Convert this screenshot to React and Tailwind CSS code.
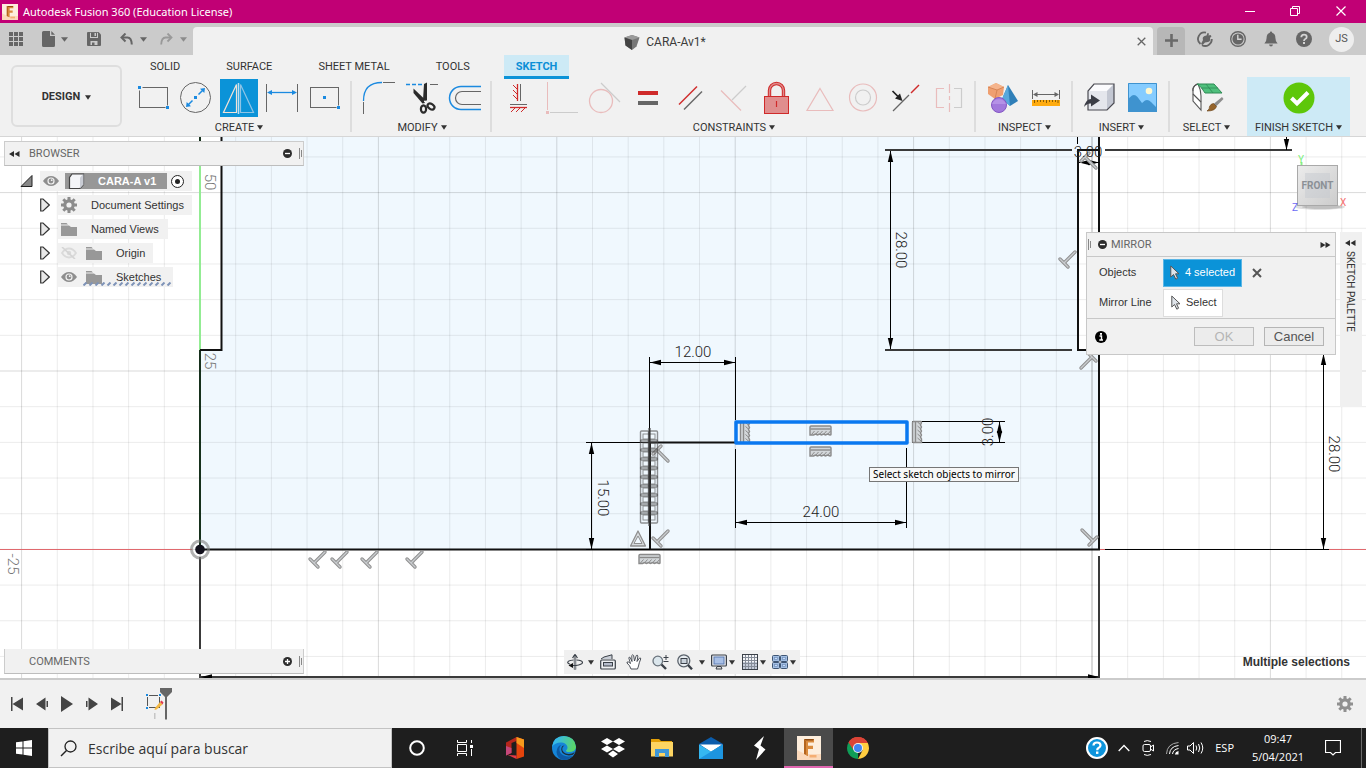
import React from "react";

function Svg({ w, h, className = "", children }) {
  return (
    <svg
      width={w}
      height={h}
      viewBox={`0 0 ${w} ${h}`}
      fill="none"
      aria-hidden="true"
      className={`shrink-0 ${className}`}
    >
      {children}
    </svg>
  );
}

function Caret({ color = "#333333", w = 7 }) {
  return (
    <Svg w={w} h={5}>
      <path d={`M0 0.3H${w}L${w / 2} 4.8Z`} fill={color} />
    </Svg>
  );
}

function FusionLogo({ size = 16 }) {
  return (
    <svg width={size} height={size} viewBox="0 0 24 24" aria-hidden="true" className="shrink-0">
      <rect width="24" height="24" fill="#fdeedd" />
      <path d="M0 14L8 18H24V24H0Z" fill="#fbd9bb" />
      <path d="M7 3L11 5.5V20L7 18Z" fill="#b5651d" />
      <path d="M7 3H17V6.5H11V9.8H16V13H11V20L9 19V5Z" fill="#d98a3c" />
      <path d="M7 3H17L16 4.5H9Z" fill="#8f4b12" />
      <path d="M12.5 19H19.5V21.5H12.5Z" fill="#f4a261" opacity="0.8" />
    </svg>
  );
}

/* ---------- Title bar ---------- */

function TitleBar() {
  return (
    <header className="flex h-[23px] shrink-0 items-center bg-[#c10075] pl-0.5 pr-0.5 text-white">
      <FusionLogo />
      <h1 className="ml-[5px] flex-1 font-['Noto_Sans','Open_Sans',sans-serif] text-[11px] leading-4">
        Autodesk Fusion 360 (Education License)
      </h1>
      <button aria-label="Minimize" className="grid h-full w-[45px] place-items-center">
        <Svg w={10} h={10}><path d="M0 4.5H10" stroke="#fff" /></Svg>
      </button>
      <button aria-label="Restore" className="grid h-full w-[45px] place-items-center">
        <Svg w={10} h={12}>
          <path d="M0.5 2.5H7.5V9.5H0.5ZM2.5 2.5V0.5H9.5V7.5H7.5" stroke="#fff" />
        </Svg>
      </button>
      <button aria-label="Close" className="grid h-full w-[47px] place-items-center">
        <Svg w={10} h={12}><path d="M0.5 0.5L9.5 9.5M9.5 0.5L0.5 9.5" stroke="#fff" strokeWidth="1.2" /></Svg>
      </button>
    </header>
  );
}

/* ---------- Quick access bar ---------- */

function QuickBar() {
  return (
    <div className="flex h-8 shrink-0 items-stretch bg-[#cbcbcb]">
      <div className="flex w-[193px] shrink-0 items-center pl-[9px]">
        <button aria-label="Data panel">
          <Svg w={14} h={14}>
            {[0, 5, 10].map((y) =>
              [0, 5, 10].map((x) => <rect key={`${x}-${y}`} x={x} y={y} width="4" height="4" fill="#666" />)
            )}
          </Svg>
        </button>
        <button aria-label="File" className="ml-[19px] flex items-center gap-1.5">
          <Svg w={13} h={16}>
            <path d="M0 1.5Q0 0 1.5 0H8V5H13V14.5Q13 16 11.5 16H1.5Q0 16 0 14.5Z" fill="#666" />
            <path d="M9.3 0L13 3.8H9.3Z" fill="#666" />
          </Svg>
          <Caret color="#666" />
        </button>
        <button aria-label="Save" className="ml-[19px]">
          <Svg w={14} h={14}>
            <path d="M0 1Q0 0 1 0H11.5L14 2.5V13Q14 14 13 14H1Q0 14 0 13Z" fill="#666" />
            <path d="M3 0.8H11V6H3Z" fill="#cbcbcb" />
            <path d="M4 0.5H10V5H4ZM7.5 1V4H9V1Z" fill="#666" fillRule="evenodd" />
            <path d="M3.5 9H10.5V13H3.5Z" fill="#cbcbcb" />
            <path d="M5 10.5H7.5V14H5Z" fill="#666" />
          </Svg>
        </button>
        <button aria-label="Undo" className="ml-[19px] flex items-center gap-[7px]">
          <Svg w={13} h={12}>
            <path d="M2 4.5H7.5Q11.5 4.5 11.8 11.5" stroke="#666" strokeWidth="2" />
            <path d="M5.5 0.5L1.5 4.5L5.5 8.5" stroke="#666" strokeWidth="2" />
          </Svg>
          <Caret color="#666" />
        </button>
        <button aria-label="Redo" className="ml-[13px] flex items-center gap-[7px]">
          <Svg w={13} h={12}>
            <path d="M11 4.5H5.5Q1.5 4.5 1.2 11.5" stroke="#999" strokeWidth="1.8" />
            <path d="M7.5 0.5L11.5 4.5L7.5 8.5" stroke="#999" strokeWidth="1.8" />
          </Svg>
          <Caret color="#8c8c8c" />
        </button>
      </div>
      <div className="mt-1 flex min-w-0 flex-1 items-center justify-center rounded-t bg-[#f1f1f1]">
        <div className="flex flex-1 items-center justify-center gap-1.5 pt-0.5 font-['Roboto',sans-serif] text-xs text-[#3c3c3c]">
          <Svg w={16} h={15}>
            <path d="M8 0L15.5 2.5L12.5 11.5L8 15L1.5 10.5L0.5 2.5Z" fill="#777" />
            <path d="M0.5 2.5L8 0L15.5 2.5L8 5Z" fill="#9a9a9a" />
            <path d="M8 5V15L1.5 10.5L0.5 2.5Z" fill="#444" />
          </Svg>
          <span>CARA-Av1*</span>
        </div>
        <button aria-label="Close document" className="mr-[7px]">
          <Svg w={9} h={9}><path d="M0.7 0.7L8.3 8.3M8.3 0.7L0.7 8.3" stroke="#666" strokeWidth="1.3" /></Svg>
        </button>
      </div>
      <button aria-label="New document" className="ml-1 mt-1 grid w-7 place-items-center rounded-t bg-[#b7b7b7] pb-0.5">
        <Svg w={13} h={13}><path d="M6.5 0V13M0 6.5H13" stroke="#6a6a6a" strokeWidth="2.6" /></Svg>
      </button>
      <div className="flex items-center gap-[17px] pl-3 pr-3">
        <button aria-label="Extensions">
          <Svg w={16} h={16}>
            <path d="M9 1.600A6.500 6.500 0 0 0 3.500 13M5 14.200A6.700 6.700 0 0 0 14.800 8" stroke="#666" strokeWidth="1.800" />
            <path d="M4 13L6 9Q5 6 7.500 5L9.500 4.500L10.500 2L12 2.500L11.500 4.500L13.500 4L14.500 5.200L13 7Q14 10 11 11L8 11.500L5.500 14Z" fill="#666" />
          </Svg>
        </button>
        <button aria-label="Job status">
          <Svg w={16} h={16}>
            <circle cx="8" cy="8" r="7.3" stroke="#666" strokeWidth="1.4" />
            <circle cx="8" cy="8" r="5.6" fill="#666" />
            <path d="M7.8 3.8V8.2H11.6" stroke="#d4d4d4" strokeWidth="1.4" />
          </Svg>
        </button>
        <button aria-label="Notifications">
          <Svg w={16} h={16}>
            <path d="M8 0.5Q9.2 0.5 9.2 1.8Q12.4 2.8 12.4 7Q12.4 10.5 14.6 12.5H1.4Q3.6 10.5 3.6 7Q3.6 2.8 6.8 1.8Q6.8 0.5 8 0.5Z" fill="#666" />
            <path d="M6 13.5H10Q9.6 15.5 8 15.5Q6.4 15.5 6 13.5Z" fill="#666" />
          </Svg>
        </button>
        <button aria-label="Help">
          <Svg w={16} h={16}>
            <circle cx="8" cy="8" r="8" fill="#666" />
            <path d="M5.3 6.3Q5.3 3.7 8 3.7Q10.7 3.7 10.7 6Q10.7 7.3 9.2 8Q8 8.6 8 10" stroke="#d4d4d4" strokeWidth="1.8" />
            <rect x="7" y="11" width="2" height="2" fill="#d4d4d4" />
          </Svg>
        </button>
        <button aria-label="Account" className="grid size-[25px] place-items-center rounded-full bg-[#eeeeee] pt-px font-['Roboto',sans-serif] text-[11px] text-[#555555]">
          JS
        </button>
      </div>
    </div>
  );
}

/* ---------- Ribbon icons, each on a 38 x 38 tile ---------- */

const G = "#666666";
const B = "#1b8ae0";
const R = "#cf2a2a";
const FR = "#e9bcbc";
const FG = "#cccccc";

const icons = {
  rectangle: (
    <>
      <rect x="5.5" y="8.5" width="28" height="20" stroke={G} />
      <rect x="3.5" y="6.5" width="5" height="5" fill="#f1f1f1" />
      <rect x="4" y="7" width="3" height="3" fill={B} />
      <rect x="31.5" y="26.5" width="5" height="5" fill="#f1f1f1" />
      <rect x="32" y="27" width="3" height="3" fill={B} />
    </>
  ),
  circle: (
    <>
      <circle cx="18.5" cy="18.5" r="15" stroke={G} />
      <path d="M11 26L15.5 21.5M21.5 15.5L26 11" stroke={B} strokeWidth="1.5" />
      <path d="M28 9L27.3 14L23 9.7ZM9 28L9.7 23L14 27.3Z" fill={B} />
      <rect x="17" y="17" width="3" height="3" fill={B} />
    </>
  ),
  mirror: (
    <>
      <rect width="38" height="38" fill="#0b93d8" />
      <path d="M16.5 5.5V33.5H3.5Z" stroke="#f2e2d6" strokeWidth="1.2" />
      <path d="M20.5 5.5V33.5H33.5Z" stroke="#8ec4e6" strokeWidth="1.2" />
      <path d="M18.5 4V35" stroke="#bfe0f2" strokeWidth="1.5" />
    </>
  ),
  dimension: (
    <>
      <path d="M3.5 5V33M34.5 5V33" stroke={G} />
      <path d="M6 13.5H32" stroke={B} strokeWidth="1.3" />
      <path d="M4 13.5L9 11V16ZM34 13.5L29 11V16Z" fill={B} />
    </>
  ),
  centerRect: (
    <>
      <rect x="4.5" y="8.5" width="28" height="20" stroke={G} />
      <rect x="17" y="17" width="3" height="3" fill={B} />
      <rect x="30.5" y="26.5" width="5" height="5" fill="#f1f1f1" />
      <rect x="31" y="27" width="3" height="3" fill={B} />
    </>
  ),
  fillet: (
    <>
      <path d="M3.5 22Q3.5 3.5 22 3.5" stroke={B} strokeWidth="1.3" />
      <path d="M3.5 23V35M23 3.5H35" stroke={G} />
    </>
  ),
  trim: (
    <>
      <path d="M3 5.5H7M9 5.5H13M15 5.5H19" stroke={B} strokeWidth="1.3" />
      <path d="M27 5.5H35" stroke={G} />
      <path d="M21 5L24 3.5V21L21.5 23.5L20 21Z" fill="#2b2b2b" />
      <path d="M10.5 9.5L22 20.5V24L19.5 24.5L10.5 14Z" fill="#2b2b2b" />
      <ellipse cx="20.5" cy="30" rx="2.6" ry="3.6" stroke="#2b2b2b" strokeWidth="2.2" />
      <ellipse cx="28" cy="27.5" rx="3.8" ry="2.5" transform="rotate(35 28 27.5)" stroke="#2b2b2b" strokeWidth="2.2" />
      <circle cx="22" cy="22.5" r="1" fill="#fff" />
    </>
  ),
  offset: (
    <>
      <path d="M35 7.5H15A11.5 11.5 0 0 0 15 30.5H35" stroke={B} strokeWidth="1.5" />
      <path d="M35 12.5H16A6.5 6.5 0 0 0 16 25.5H35" stroke={G} strokeWidth="1.2" />
    </>
  ),
  horizVert: (
    <>
      <path d="M17.5 5V22" stroke={R} strokeWidth="1.3" />
      <path d="M20.5 5V22" stroke={G} />
      <path d="M13 6L17 10M13 11L17 15M13 16L17 20" stroke={R} />
      <path d="M10 25.500H27" stroke={G} />
      <path d="M10 28.500H27" stroke={R} strokeWidth="1.3" />
      <path d="M15 29L11 33M20 29L16 33M25 29L21 33" stroke={R} />
    </>
  ),
  coincident: (
    <>
      <path d="M4.5 3V31" stroke={FR} />
      <path d="M7 33.5H35" stroke={FG} />
      <rect x="3" y="32" width="3" height="3" fill={FR} />
    </>
  ),
  tangent: (
    <>
      <circle cx="15" cy="22" r="11.5" stroke={FR} strokeWidth="1.3" />
      <path d="M15 4L34 23" stroke={FG} strokeWidth="1.2" />
    </>
  ),
  equal: (
    <>
      <rect x="9" y="12" width="20" height="4" fill={R} />
      <rect x="9" y="22" width="20" height="4" fill={G} />
    </>
  ),
  parallel: (
    <>
      <path d="M7 25.5L25 7.5" stroke={R} strokeWidth="1.4" />
      <path d="M12 30.5L30 12.5" stroke={G} strokeWidth="1.4" />
    </>
  ),
  perpendicular: (
    <>
      <path d="M6 11.5L26 31.5" stroke={FR} strokeWidth="1.2" />
      <path d="M17 21L31 7" stroke={FG} strokeWidth="1.2" />
    </>
  ),
  lock: (
    <>
      <path d="M11.5 17V11.500A7 7 0 0 1 25.500 11.500V17" stroke={R} strokeWidth="3.4" />
      <path d="M11.5 17V11.500A7 7 0 0 1 25.500 11.500V17" stroke="#e08a8a" strokeWidth="1.4" />
      <rect x="6.500" y="17.500" width="24" height="17" fill="#e08e8e" stroke={R} />
      <path d="M18.500 22V28" stroke={R} strokeWidth="1.2" />
    </>
  ),
  midpoint: <path d="M19 9.5L32 31.5H6Z" stroke={FR} strokeWidth="1.2" />,
  concentric: (
    <>
      <circle cx="19" cy="18.5" r="13.5" stroke={FR} strokeWidth="1.2" />
      <circle cx="19" cy="18.5" r="7.5" stroke={FG} strokeWidth="1.2" />
    </>
  ),
  collinear: (
    <>
      <path d="M6 32L22 16" stroke={G} strokeWidth="1.3" />
      <path d="M24 14L32 6" stroke={R} strokeWidth="1.5" />
      <path d="M5.500 12L11 17.500" stroke="#222" strokeWidth="1.7" />
      <path d="M15.500 22L8 19.500L13 14.500Z" fill="#222" />
    </>
  ),
  symmetry: (
    <>
      <path d="M14 9.5H6.5V28.5H14" stroke={FR} strokeWidth="1.2" />
      <path d="M24 9.5H31.5V28.5H24" stroke={FG} strokeWidth="1.2" />
      <path d="M19.5 5V14M19.5 17V21M19.5 24V33" stroke={FR} strokeWidth="1.2" />
    </>
  ),
  shapes: (
    <>
      <path d="M12 4L20 8L19 16L11 20L4 15V8Z" fill="#ef9f70" />
      <path d="M12 4L20 8L13 11L4 8Z" fill="#f5b48c" />
      <path d="M13 11L11 20M4 8L13 11L20 8" stroke="#cf7c4c" strokeWidth="0.8" />
      <path d="M24 6L34 22L26 27L18 20Z" fill="#2f7fb8" />
      <path d="M24 6L26 27L18 20Z" fill="#58a8dc" />
      <circle cx="15" cy="26" r="7.5" fill="#a279dc" stroke="#8456c4" />
      <path d="M8 25A7.5 7.5 0 0 1 22 25Z" fill="#b592e6" />
    </>
  ),
  measure: (
    <>
      <path d="M5.5 11V20M32.5 11V20M7 15.5H31" stroke={G} />
      <path d="M6 15.5L10.5 13V18ZM32 15.5L27.500 13V18Z" fill={G} />
      <rect x="5" y="21" width="28" height="6" fill="#ffab0f" />
      <path d="M7.5 21V24M10.5 21V23M13.5 21V23M16.5 21V23M19.5 21V24M22.5 21V23M25.5 21V23M28.5 21V23M31 21V24" stroke="#8a5c00" />
    </>
  ),
  insert: (
    <>
      <path d="M13 5H33V24L26 31H7V12Z" fill="#e4e6ec" />
      <path d="M13 5H33L26 12H7Z" fill="#fbfbfd" />
      <path d="M26 12L33 5V24L26 31Z" fill="#c3c7d2" />
      <path d="M13 5H33V24L26 31H7V12Z" stroke="#4a4a52" strokeWidth="1.2" />
      <path d="M3 28Q5 20 10 20V15.5L19 21.5L10 27.5V24.5Q6 24 3 28Z" fill="#3b3d46" />
    </>
  ),
  image: (
    <>
      <rect x="4" y="4" width="29" height="29" fill="#85ccff" />
      <path d="M4 20L8 16.5Q11 15 13.5 18L18 24L21 21.5Q24 20 27 23L33 29V33H4Z" fill="#3f93cf" />
      <path d="M4.5 4.5H32.5V32.5H4.5Z" stroke="#3f93cf" />
      <circle cx="25" cy="12" r="3.3" fill="#fff8d0" />
    </>
  ),
  select: (
    <>
      <path d="M5 10Q6 6 10 5Q13 11 13 17V31L5 22Z" fill="#fff" stroke="#555" strokeWidth="1.1" />
      <path d="M5 15L13 23M9 5Q4 8 5 12" stroke="#555" strokeWidth="1.1" />
      <path d="M9 5H26L34 14H17Q14 8 9 5Z" fill="#4fbf7c" stroke="#2e8a55" />
      <path d="M18 5L25 14M13 9H30" stroke="#2e8a55" strokeWidth="0.8" />
      <path d="M34 18L35.5 20L28 27.5L25.5 25Z" fill="#8d8d8d" />
      <path d="M25.5 24.5L28.5 27.5Q27 32 19 32Q22 30 21.5 27.5Q23 24.5 25.5 24.5Z" fill="#95642c" stroke="#6d4518" strokeWidth="0.7" />
    </>
  ),
  finish: (
    <>
      <circle cx="19" cy="19" r="15.5" fill="#5ec70a" />
      <path d="M11.5 19L17 24.5L28 13.5" stroke="#fff" strokeWidth="4" />
    </>
  ),
};

const groupLabel = "flex h-[19px] items-center gap-[3px] whitespace-nowrap pt-0.5";

function ToolGroup({ label, tools, last = false }) {
  return (
    <>
      <section className={last ? "flex w-[73px] flex-col items-center" : "flex flex-col items-center pl-2 pr-1.5"}>
        <div className="flex gap-[5px]">
          {tools.map((t) => (
            <button key={t} aria-label={t} className="size-[38px]">
              <Svg w={38} h={38}>{icons[t]}</Svg>
            </button>
          ))}
        </div>
        <button className={groupLabel}>
          {label}
          <Caret w={6} />
        </button>
      </section>
      {!last && <div className="mt-0.5 h-[51px] w-0.5 shrink-0 bg-[#dddddd]" />}
    </>
  );
}

function Ribbon() {
  return (
    <div className="flex h-[82px] shrink-0 border-b border-[#d6d6d6] bg-[#f1f1f1] font-['Roboto','Liberation_Sans',sans-serif] text-[11px] leading-4 text-[#333333]">
      <button className="ml-[11px] mt-2.5 flex h-[62px] w-[111px] shrink-0 items-center justify-center gap-[5px] rounded-md border-2 border-[#dedede] pt-0.5 font-bold">
        DESIGN
        <Caret w={6} />
      </button>
      <div className="ml-1 flex flex-col">
        <nav className="ml-3 flex h-6 gap-[22px]">
          {["SOLID", "SURFACE", "SHEET METAL", "TOOLS"].map((t) => (
            <button key={t} className="px-3">{t}</button>
          ))}
          <button className="border-b-3 border-[#0b93d8] bg-[#cdeaf6] px-3 pt-0.5 font-bold text-[#0b8fd6]">SKETCH</button>
        </nav>
        <div className="flex">
          <ToolGroup label="CREATE" tools={["rectangle", "circle", "mirror", "dimension", "centerRect"]} />
          <ToolGroup label="MODIFY" tools={["fillet", "trim", "offset"]} />
          <ToolGroup
            label="CONSTRAINTS"
            tools={["horizVert", "coincident", "tangent", "equal", "parallel", "perpendicular", "lock", "midpoint", "concentric", "collinear", "symmetry"]}
          />
          <ToolGroup label="INSPECT" tools={["shapes", "measure"]} />
          <ToolGroup label="INSERT" tools={["insert", "image"]} />
          <ToolGroup label="SELECT" tools={["select"]} last />
          <section className="-mt-0.5 ml-1 flex w-[103px] flex-col items-center bg-[#cdeaf6] pt-0.5">
            <button aria-label="Finish sketch" className="size-[38px]">
              <Svg w={38} h={38}>{icons.finish}</Svg>
            </button>
            <button className={groupLabel}>
              FINISH SKETCH
              <Caret w={6} />
            </button>
          </section>
        </div>
      </div>
    </div>
  );
}

/* ---------- Sketch drawing ---------- */

const GRID = 35.68;

function Arrow({ x, y, dir }) {
  const angle = { up: 0, right: 90, down: 180, left: 270 }[dir];
  return <path d="M0 0L2.7 11H-2.7Z" fill="#000" transform={`translate(${x} ${y}) rotate(${angle})`} />;
}

function Perp({ x, y, angle = 0 }) {
  const d = "M8 -7L-3 4M-7 0L1 8";
  return (
    <g transform={`translate(${x} ${y}) rotate(${angle})`} strokeLinecap="round">
      <path d={d} stroke="#8f8f8f" strokeWidth="3.4" />
      <path d={d} stroke="#c9cccf" strokeWidth="1.4" />
    </g>
  );
}

function Level({ x, y, vertical = false }) {
  return (
    <g transform={`translate(${x} ${y}) rotate(${vertical ? -90 : 0})`} stroke="#8a8a8a">
      <path d="M-10.5 -3.5Q-10.5 -4.500 -9.500 -4.500H9.500Q10.500 -4.500 10.500 -3.500V4Q10.500 4.500 9.500 4.500L7 3.500L5 4.500L3 3.500L1 4.500L-1 3.500L-3 4.500L-5 3.500L-7 4.500H-10.500Z" fill="#d3d7da" strokeWidth="1.4" />
      <path d="M-10 -1.500H10" strokeWidth="1.4" />
      <path d="M-9 4L-6 0.500M-5 4L-2 0.500M-1 4L2 0.500M3 4L6 0.500M7 4L10 0.500" />
    </g>
  );
}

function Label({ x, y, angle = 0, children, color = "#222222" }) {
  return (
    <text
      transform={`translate(${x} ${y}) rotate(${angle})`}
      textAnchor="middle"
      dominantBaseline="central"
      fill={color}
      className="font-['Roboto','Noto_Sans',sans-serif] text-[15px] font-light"
    >
      {children}
    </text>
  );
}

function SketchDrawing() {
  const columns = Array.from({ length: 80 }, (_, i) => i - 5);
  const rows = Array.from({ length: 50 }, (_, i) => i - 15);
  return (
    <svg className="absolute inset-0 size-full" fill="none" aria-label="Sketch of CARA-A">
      <g transform="translate(0 -137)">
        <path d="M221 137H1099V150H1078V350H1099V549H200V350H221Z" fill="#f0f8fe" />
        {columns.map((i) => (
          <path key={i} d={`M${200 + i * GRID} 0V3000`} stroke="#000" strokeOpacity={i % 5 === 0 ? 0.15 : 0.08} />
        ))}
        {rows.map((i) => (
          <path key={i} d={`M0 ${549.4 + i * GRID}H4000`} stroke="#000" strokeOpacity={i % 5 === 0 ? 0.15 : 0.08} />
        ))}
        <path d="M1092 137V678" stroke="#000" strokeOpacity="0.08" strokeWidth="2" />

        <path d="M0 549.5H192M1099 549.5H4000" stroke="#e0696e" />
        <path d="M200 137V350" stroke="#93ec93" strokeWidth="2" />
        <path d="M200 137V142" stroke="#16301c" strokeWidth="2" />
        <path d="M200 350V549" stroke="#16301c" strokeWidth="2" />

        <g stroke="#111" strokeWidth="2">
          <path d="M200 350H221.5V137" />
          <path d="M200 549.5H1099V137" />
          <path d="M1099 150H1078V350H1099" />
          <path d="M650 549V442.5H735" />
        </g>
        <g stroke="#3a3a3a" strokeWidth="2">
          <path d="M885 150H1072M1105 150H1292M885 350H1072" />
          <path d="M200 557V678M1099 556V678M200 677H1099" />
        </g>
        <g stroke="#000">
          <path d="M890.5 151V349" />
          <path d="M1077.5 137V144M1286.5 137V150M1079 162.5H1099" />
          <path d="M649.5 357V442M735.5 357V420M650 362.5H735" />
          <path d="M586 442.5H650M586 549.5H650M591.5 443V549" />
          <path d="M735.5 449V528M906.5 448V528M736 522.5H906" />
          <path d="M912 421.5H1005M912 442.5H1005M999.5 422V442" />
          <path d="M1105 549.5H1329M1323.5 350V549" />
        </g>
        <Arrow x={890.5} y={151} dir="up" />
        <Arrow x={890.5} y={349} dir="down" />
        <Arrow x={1286.5} y={150} dir="down" />
        <Arrow x={1079} y={162.5} dir="left" />
        <Arrow x={1099} y={162.5} dir="right" />
        <Arrow x={650} y={362.5} dir="left" />
        <Arrow x={735} y={362.5} dir="right" />
        <Arrow x={591.5} y={443} dir="up" />
        <Arrow x={591.5} y={549} dir="down" />
        <Arrow x={736} y={522.5} dir="left" />
        <Arrow x={906} y={522.5} dir="right" />
        <Arrow x={999.5} y={422} dir="up" />
        <Arrow x={999.5} y={442} dir="down" />
        <Arrow x={1323.5} y={354} dir="up" />
        <Arrow x={1323.5} y={549} dir="down" />
        <Arrow x={201} y={677} dir="left" />
        <Arrow x={1099} y={677} dir="right" />

        <Perp x={317} y={559} />
        <Perp x={339} y={559} />
        <Perp x={369} y={559} />
        <Perp x={414} y={559} />
        <Perp x={660} y={538} />
        <Perp x={1067} y={259} />
        <Perp x={1089} y={361} angle={180} />
        <Perp x={1089} y={538} angle={-90} />
        <Perp x={661} y={453} angle={90} />
        <Perp x={1089} y={160} angle={90} />

        <g stroke="#4a4a4a" strokeOpacity="0.6">
          {Array.from({ length: 10 }, (_, i) => (
            <g key={i}>
              <rect x="640.5" y={431 + i * 9} width="8" height="11" rx="1" strokeWidth="1.4" />
              <rect x="649.5" y={431 + i * 9} width="8" height="11" rx="1" strokeWidth="1.4" />
              <rect x="643" y={434 + i * 9} width="12" height="5" />
            </g>
          ))}
        </g>
        <path d="M649.5 428V526" stroke="#333" strokeWidth="2" />
        <path d="M638 531L645.5 546H630.5Z" stroke="#8f8f8f" strokeWidth="1.3" fill="#d6dadd" strokeLinejoin="round" />
        <path d="M638 536L642 543.5H634Z" stroke="#8f8f8f" fill="#f0f8fe" />

        <Level x={649.5} y={559} />
        <Level x={820.5} y={430.5} />
        <Level x={820.5} y={451.5} />
        <Level x={745} y={432.5} vertical />
        <Level x={917} y={432} vertical />
        <rect x="736" y="422" width="171" height="21" stroke="#0a78f0" strokeWidth="3.5" strokeLinejoin="round" />

        <circle cx="200" cy="549.5" r="8.5" stroke="#7d7d7d" strokeOpacity="0.6" strokeWidth="3" />
        <circle cx="200" cy="549.5" r="4.8" fill="#12101c" />

        <Label x={693} y={352}>12.00</Label>
        <Label x={821} y={512}>24.00</Label>
        <Label x={1088} y={152}>3.00</Label>
        <Label x={901} y={250} angle={90}>28.00</Label>
        <Label x={603} y={498} angle={90}>15.00</Label>
        <Label x={1334} y={454} angle={90}>28.00</Label>
        <Label x={988} y={432} angle={-90}>3.00</Label>
        <Label x={210} y={182} angle={90} color="#777777">50</Label>
        <Label x={210} y={361} angle={90} color="#777777">25</Label>
        <Label x={13} y={564} angle={90} color="#777777">-25</Label>
      </g>
    </svg>
  );
}

/* ---------- Browser tree ---------- */

function Expander() {
  return (
    <Svg w={10} h={14}>
      <path d="M0.7 1V13H3L9.3 7L3 1Z" fill="#e8e8e8" stroke="#333" strokeWidth="1.2" />
    </Svg>
  );
}

function Eye() {
  return (
    <Svg w={16} h={12}>
      <path d="M0 6Q3.5 1 8 1Q12.5 1 16 6Q12.5 11 8 11Q3.5 11 0 6Z" fill="#8e8e8e" />
      <circle cx="8" cy="6" r="3.6" fill="#f1f1f1" />
      <circle cx="8" cy="6" r="2.4" fill="#8e8e8e" />
      <circle cx="8.7" cy="5.2" r="0.9" fill="#f1f1f1" />
    </Svg>
  );
}

function EyeOff() {
  return (
    <Svg w={16} h={12}>
      <path d="M1 6Q4 1.5 8 1.5Q12 1.5 15 6Q12 10.5 8 10.5Q4 10.5 1 6Z" stroke="#dadada" strokeWidth="1.8" />
      <circle cx="8" cy="6" r="2.2" fill="#dadada" />
      <path d="M1 0L14 12" stroke="#d4d4d4" strokeWidth="1.6" />
    </Svg>
  );
}

function Folder() {
  return (
    <Svg w={16} h={13}>
      <path d="M0 0H5.5L7 1.5H0ZM0 2.5H8L10 4H16V13H0Z" fill="#989898" />
    </Svg>
  );
}

function Gear({ color = "#8c8c8c" }) {
  return (
    <Svg w={16} h={16}>
      <g stroke={color} strokeWidth="3">
        <path d="M8 0V16M0 8H16M2.3 2.3L13.7 13.7M13.7 2.3L2.3 13.7" />
      </g>
      <circle cx="8" cy="8" r="5.8" fill={color} />
      <circle cx="8" cy="8" r="2.6" fill="#f1f1f1" />
    </Svg>
  );
}

function Grip({ className = "" }) {
  return (
    <Svg w={3} h={11} className={className}>
      <path d="M0.5 0V11M2.5 2V9" stroke="#888" />
    </Svg>
  );
}

function CircleSign({ plus = false }) {
  return (
    <Svg w={9} h={9}>
      <circle cx="4.5" cy="4.5" r="4.5" fill="#2d2d2d" />
      <path d={plus ? "M2 4.5H7M4.5 2V7" : "M2 4.5H7"} stroke="#fff" strokeWidth="1.3" />
    </Svg>
  );
}

const rowText = "font-['Liberation_Sans',Arial,sans-serif] text-[11px] leading-4 text-[#333333]";

function BrowserPanel() {
  return (
    <aside className="absolute left-1 top-1 w-[300px]">
      <div className="flex h-[25px] items-center border border-[#cccccc] border-b-[#bdbdbd] bg-[#f1f1f1] pl-1 pr-px font-['Roboto',sans-serif] text-[11px] text-[#666666]">
        <button aria-label="Collapse browser">
          <Svg w={11} h={6}><path d="M5 0V6L0 3ZM10.5 0V6L5.5 3Z" fill="#2d2d2d" /></Svg>
        </button>
        <h2 className="ml-[9px] flex-1 pt-0.5">BROWSER</h2>
        <button aria-label="Minimize browser"><CircleSign /></button>
        <Grip className="ml-[7px]" />
      </div>
      <ul className="mt-[3px] flex flex-col">
        <li className="flex h-6 items-center pl-4">
          <button aria-label="Collapse CARA-A">
            <Svg w={13} h={12}>
              <path d="M12 0.5V11.5H1Z" fill="#888" stroke="#222" />
            </Svg>
          </button>
          <div className="ml-[7px] flex h-5 w-[152px] items-center bg-[#f1f1f1] pl-[3px]">
            <button aria-label="Toggle visibility"><Eye /></button>
            <button className="ml-1.5 flex h-4 w-[102px] items-center gap-[13px] bg-[#979797] pl-[3px] font-['Liberation_Sans',Arial,sans-serif] text-[11px] font-bold text-white">
              <Svg w={17} h={16}>
                <path d="M4 1H15.5V11.5L12 15.5H1.5V4.5Z" fill="#f4f5f8" stroke="#444" strokeWidth="1.2" />
                <path d="M12 4.5L15.5 1V11.5L12 15.5Z" fill="#c9ccd4" />
              </Svg>
              CARA-A v1
            </button>
            <label className="ml-1 flex">
              <input type="radio" name="active-component" defaultChecked aria-label="Active component" className="grid size-[13px] appearance-none place-items-center rounded-full border border-[#222222] bg-white before:size-[5px] before:rounded-full before:bg-[#222222] before:content-['']" />
            </label>
          </div>
        </li>
        <li className="flex h-6 items-center pl-9">
          <button aria-label="Expand Document Settings"><Expander /></button>
          <div className={`ml-2 flex h-5 w-[134px] items-center gap-[14px] bg-[#f1f1f1] pl-[3px] ${rowText}`}>
            <Gear />
            <span>Document Settings</span>
          </div>
        </li>
        <li className="flex h-6 items-center pl-9">
          <button aria-label="Expand Named Views"><Expander /></button>
          <div className={`ml-2 flex h-5 w-[110px] items-center gap-[14px] bg-[#f1f1f1] pl-[3px] ${rowText}`}>
            <Folder />
            <span>Named Views</span>
          </div>
        </li>
        <li className="flex h-6 items-center pl-9">
          <button aria-label="Expand Origin"><Expander /></button>
          <div className={`ml-2 flex h-5 w-[95px] items-center bg-[#f1f1f1] pl-[3px] ${rowText}`}>
            <button aria-label="Show Origin"><EyeOff /></button>
            <span className="ml-[9px] flex items-center gap-[14px]"><Folder />Origin</span>
          </div>
        </li>
        <li className="flex h-6 items-center pl-9">
          <button aria-label="Expand Sketches"><Expander /></button>
          <div className={`relative ml-2 flex h-5 w-[115px] items-center bg-[#f1f1f1] pl-[3px] ${rowText}`}>
            <button aria-label="Hide Sketches"><Eye /></button>
            <span className="ml-[9px] flex items-center gap-[14px]"><Folder />Sketches</span>
            <Svg w={90} h={4} className="absolute bottom-px left-[25px]">
              {Array.from({ length: 15 }, (_, i) => (
                <path key={i} d={`M${i * 6 + 0.5} 3.5L${i * 6 + 3.5} 0.5`} stroke="#7e93b8" strokeWidth="2" />
              ))}
            </Svg>
          </div>
        </li>
      </ul>
    </aside>
  );
}

function CommentsPanel() {
  return (
    <div className="absolute bottom-1 left-1 flex h-[25px] w-[300px] items-center border border-t-0 border-[#cccccc] border-b-[#bdbdbd] bg-[#f1f1f1] pl-6 pr-px font-['Roboto',sans-serif] text-[11px] text-[#666666]">
      <h2 className="flex-1 pt-0.5">COMMENTS</h2>
      <button aria-label="Expand comments"><CircleSign plus /></button>
      <Grip className="ml-[7px]" />
    </div>
  );
}

/* ---------- Mirror dialog ---------- */

function Pointer() {
  return (
    <Svg w={10} h={15}>
      <path d="M0.8 1V12L3.5 9.5L5.8 14.2L7.6 13.2L5.5 8.8H9Z" fill="#dfe4ea" stroke="#555" />
    </Svg>
  );
}

function MirrorDialog() {
  return (
    <section
      aria-label="Mirror"
      className="absolute right-[30px] top-[95px] w-[250px] border border-[#c8c8c8] bg-[#f1f1f1] font-['Liberation_Sans',Arial,sans-serif] text-[11px] text-[#333333]"
    >
      <div className="flex h-6 items-center border-b border-[#c8c8c8] pl-px pr-1 font-['Roboto',sans-serif] text-[#666666]">
        <Grip />
        <button aria-label="Collapse dialog" className="ml-[7px]"><CircleSign /></button>
        <h2 className="ml-1 flex-1 pt-0.5">MIRROR</h2>
        <button aria-label="Dock">
          <Svg w={11} h={6}><path d="M0.5 0V6L5.5 3ZM5.5 0V6L10.5 3Z" fill="#2d2d2d" /></Svg>
        </button>
      </div>
      <div className="flex h-[62px] flex-col justify-center gap-0.5 border-b border-[#c8c8c8] pl-3">
        <div className="flex h-7 items-center">
          <label htmlFor="objects" className="w-16">Objects</label>
          <button id="objects" className="flex h-full w-[79px] items-center justify-center gap-[5px] border border-[#5ab6e6] bg-[#0b93d8] text-white">
            <Pointer />
            4 selected
          </button>
          <button aria-label="Clear selection" className="ml-[10px]">
            <Svg w={10} h={10}><path d="M1 1L9 9M9 1L1 9" stroke="#555" strokeWidth="2" /></Svg>
          </button>
        </div>
        <div className="flex h-7 items-center">
          <label htmlFor="mirror-line" className="w-16">Mirror Line</label>
          <button id="mirror-line" className="flex h-full items-center gap-[5px] border border-[#dddddd] bg-white pl-[7px] pr-[5px]">
            <Pointer />
            Select
          </button>
        </div>
      </div>
      <div className="flex h-[35px] items-center pl-2 pr-[11px]">
        <Svg w={12} h={12}>
          <circle cx="6" cy="6" r="6" fill="#000" />
          <path d="M4.5 5H6.5V9M4.3 9H8" stroke="#fff" strokeWidth="1.4" />
          <rect x="5" y="2" width="2" height="1.8" fill="#fff" />
        </Svg>
        <div className="flex flex-1 justify-end gap-2.5 text-[13px]">
          <button disabled className="h-[19px] w-[60px] border border-[#bdbdbd] bg-[#ececec] leading-4 text-[#b5b5b5]">OK</button>
          <button className="h-[19px] w-[60px] border border-[#b5b5b5] bg-[#ececec] leading-4 text-[#555555]">Cancel</button>
        </div>
      </div>
    </section>
  );
}

function ViewCube() {
  return (
    <svg width="66" height="68" viewBox="0 0 66 68" className="absolute right-2 top-[13px]" role="img" aria-label="View cube: front">
      <defs>
        <linearGradient id="cube" x1="0" y1="0" x2="1" y2="1">
          <stop offset="0" stopColor="#ececec" />
          <stop offset="1" stopColor="#cccccc" />
        </linearGradient>
      </defs>
      <ellipse cx="28" cy="57" rx="25" ry="3" fill="#000" opacity="0.12" />
      <ellipse cx="30" cy="57" rx="20" ry="2" fill="#000" opacity="0.14" />
      <path d="M9.5 12V15" stroke="#8cf08c" strokeWidth="2" />
      <rect x="5.5" y="15.5" width="40" height="40" fill="url(#cube)" stroke="#a9a9a9" />
      <rect x="13" y="23" width="25" height="25" fill="#c5c9cf" opacity="0.5" />
      <g className="font-['Roboto',sans-serif] text-[10px] font-bold">
        <text x="25.5" y="39" textAnchor="middle" fill="#8b9096">FRONT</text>
        <g fontWeight="400">
          <text x="6" y="13" fill="#7aee7a">Y</text>
          <text x="0" y="61" fill="#6a6af5">Z</text>
          <text x="48" y="56" fill="#f57070">X</text>
        </g>
      </g>
    </svg>
  );
}

/* ---------- Navigation bar ---------- */

function NavBar() {
  const k = "#3a4048";
  return (
    <div className="absolute bottom-1 left-[564px] flex h-6 items-center bg-[#f0f0f0] pl-[3px] pr-1">
      <button aria-label="Orbit" className="flex items-center gap-[5px]">
        <Svg w={16} h={16}>
          <path d="M8 1V15.5" stroke={k} strokeWidth="2.4" />
          <path d="M8 2V15" stroke="#fff" strokeWidth="0.8" />
          <path d="M5.500 4L8 0.500L10.500 4" stroke={k} strokeWidth="1.2" />
          <path d="M6.5 6Q0.700 6.500 0.700 8.500Q0.700 9.500 3 10.300M9.500 6Q15.500 6.500 15.500 8.500Q15.500 10.500 9 11.500H5" stroke={k} strokeWidth="1.2" />
          <path d="M1.500 11.5L6 9V14Z" fill="#111" />
        </Svg>
        <Caret w={6} />
      </button>
      <button aria-label="Look at" className="ml-1.5">
        <Svg w={16} h={16}>
          <path d="M1 5L4 3L12 0.8V5" fill="#c9ced6" stroke={k} />
          <rect x="0.7" y="6" width="14.6" height="9" rx="1" fill="#eef0f3" stroke={k} strokeWidth="1.2" />
          <rect x="3.5" y="8.5" width="9" height="3.5" fill="#b5bccb" stroke={k} />
        </Svg>
      </button>
      <button aria-label="Pan" className="ml-2.5">
        <Svg w={16} h={16}>
          <path d="M5 15Q4 11.5 1 9Q0.5 7.5 2.5 8L4.5 9.5L2.8 4Q3 2.5 4.2 3.5L6 7.5L5.8 1.5Q6.8 0 7.6 1.5L8.5 7L10.3 1.5Q11.5 0.6 11.9 2L11 7.5L13.5 4Q15 3.6 14.7 5Q13 9 12.5 12L11.5 15Z" fill="#fff" stroke={k} strokeWidth="0.9" />
        </Svg>
      </button>
      <button aria-label="Zoom" className="ml-2.5">
        <Svg w={17} h={16}>
          <circle cx="5.8" cy="7" r="4.8" fill="#dbe6ec" stroke="#6a737c" strokeWidth="1.3" />
          <path d="M9.5 10.5L14 15" stroke={k} strokeWidth="2.4" />
          <path d="M11.5 3.5H16.5M14 1V6M11.5 7.5H16.5" stroke={k} />
        </Svg>
      </button>
      <button aria-label="Fit" className="ml-2 flex items-center gap-1.5">
        <Svg w={16} h={16}>
          <circle cx="6.8" cy="6.8" r="6" fill="#e8edf1" stroke="#5b636c" strokeWidth="1.3" />
          <rect x="4" y="4.5" width="6" height="5" fill="#c9d2db" stroke={k} />
          <path d="M11 11L15 15.3" stroke={k} strokeWidth="2.4" />
        </Svg>
        <Caret w={6} />
      </button>
      <button aria-label="Display settings" className="ml-1.5 flex items-center gap-0.5">
        <Svg w={16} h={16}>
          <rect x="0.6" y="1" width="14.8" height="11" rx="1" fill="#e6e8ec" stroke={k} strokeWidth="1.2" />
          <rect x="3" y="3" width="10" height="7" fill="#a9c0e6" stroke="#5c7db3" />
          <path d="M6 12.5H10L11 15H5Z" fill="#ddd" stroke={k} />
        </Svg>
        <Caret w={6} />
      </button>
      <button aria-label="Grid and snaps" className="ml-[7px] flex items-center gap-0.5">
        <Svg w={16} h={16}>
          <rect x="0.5" y="0.5" width="15" height="15" fill="#f4f5f7" stroke={k} />
          <rect x="1" y="8" width="14" height="7" fill="#c4cbd9" />
          <path d="M3.5 1V15M6.5 1V15M9.5 1V15M12.5 1V15M1 3.5H15M1 6.5H15M1 9.5H15M1 12.5H15" stroke="#858c98" />
        </Svg>
        <Caret w={6} />
      </button>
      <button aria-label="Viewports" className="ml-1.5 flex items-center gap-0.5">
        <Svg w={16} h={14}>
          {[[0, 0], [8, 0], [0, 7], [8, 7]].map(([x, y]) => (
            <g key={`${x}-${y}`}>
              <rect x={x + 0.5} y={y + 0.5} width="7" height="6" rx="1" fill="#a3bfe3" stroke="#3f5675" />
              <rect x={x + 2.5} y={y + 2.5} width="3" height="2" fill="#c7dcf5" stroke="#6f8fbd" strokeWidth="0.7" />
            </g>
          ))}
        </Svg>
        <Caret w={6} />
      </button>
    </div>
  );
}

function Canvas() {
  return (
    <main className="relative min-h-0 flex-1 overflow-hidden bg-white">
      <SketchDrawing />
      <ViewCube />
      <BrowserPanel />
      <CommentsPanel />
      <div role="tooltip" className="absolute left-[869px] top-[330px] border border-[#767676] bg-[#f7f7f7] px-[3px] font-['Noto_Sans','Open_Sans',sans-serif] text-[10px] leading-[13px] text-black">
        Select sketch objects to mirror
      </div>
      <NavBar />
      <p className="absolute bottom-2 right-4 font-['Liberation_Sans',Arial,sans-serif] text-xs font-bold leading-4 text-[#333333]">
        Multiple selections
      </p>
      <MirrorDialog />
      <button className="absolute right-1 top-[95px] flex h-[175px] w-[22px] flex-col items-center gap-[5px] bg-[#f0f0f0] pr-0.5 pt-2 font-['Roboto',sans-serif] text-[10px] text-[#333333]">
        <Svg w={11} h={6}><path d="M5 0V6L0 3ZM10.5 0V6L5.5 3Z" fill="#2d2d2d" /></Svg>
        <span className="[writing-mode:vertical-rl]">SKETCH PALETTE</span>
      </button>
    </main>
  );
}

/* ---------- Timeline ---------- */

function Timeline() {
  const c = "#444444";
  return (
    <footer className="flex h-[50px] shrink-0 items-center border-t-2 border-[#cbcbcb] bg-[#f1f1f1] pl-[11px] pr-[13px]">
      <div className="flex items-center gap-[13px]">
        <button aria-label="Go to start"><Svg w={12} h={14}><path d="M0 0H1.5V14H0ZM12 0.5V13.5L1.5 7Z" fill={c} /></Svg></button>
        <button aria-label="Step back"><Svg w={12} h={14}><path d="M9.5 0.5V13.5L0 7ZM10.5 4H12V10H10.5Z" fill={c} /></Svg></button>
        <button aria-label="Play"><Svg w={12} h={16}><path d="M0 0L12 8L0 16Z" fill={c} /></Svg></button>
        <button aria-label="Step forward"><Svg w={12} h={14}><path d="M2.5 0.5V13.5L12 7ZM0 4H1.5V10H0Z" fill={c} /></Svg></button>
        <button aria-label="Go to end"><Svg w={12} h={14}><path d="M10.5 0H12V14H10.5ZM0 0.5V13.5L10.5 7Z" fill={c} /></Svg></button>
      </div>
      <button aria-label="Sketch feature" className="ml-[23px]">
        <Svg w={28} h={34}>
          <rect x="1.5" y="8.5" width="12" height="12" stroke="#555" />
          <path d="M0 7H3V10H0ZM12 7H15V10H12ZM0 19H3V22H0Z" fill="#f1f1f1" />
          <path d="M0 7H2V9H0ZM13 7H15V9H13ZM0 20H2V22H0Z" fill="#1b8ae0" />
          <path d="M9 21L14 15L16.5 17.5L10.5 22.5L8.5 23Z" fill="#f5b942" />
          <path d="M14 15L15.5 13.5L17.5 15.5L16.5 17.5Z" fill="#e23a4e" />
          <path d="M8 26H9.5V32H8Z" fill="#c6c6c6" />
          <path d="M14 1H26V5L21 10V32.5H19V10L14 5Z" fill="#666" />
        </Svg>
      </button>
      <button aria-label="Timeline settings" className="ml-auto"><Gear color="#909090" /></button>
    </footer>
  );
}

/* ---------- Taskbar ---------- */

const taskApps = [
  ["Cortana", (
    <Svg w={24} h={24}><circle cx="12" cy="12" r="6.8" stroke="#fff" strokeWidth="2" /></Svg>
  )],
  ["Task view", (
    <Svg w={24} h={24}>
      <path d="M3.5 4V6.5H12.5V4M3.5 20V17.5H12.5V20M3.5 8.5H12.5V15.5H3.5ZM17.5 4V7M17.5 13V20" stroke="#fff" />
      <rect x="16" y="9" width="3" height="3" fill="#fff" />
    </Svg>
  )],
  ["Office", (
    <Svg w={24} h={24}>
      <path d="M3 6.5L13.5 1V5L8.5 7V17L3 19.500Z" fill="#b5261c" />
      <path d="M3 19.500L8.500 17V12L3 10Z" fill="#c4477a" />
      <path d="M13.5 1L21 3.500V20.500L13.5 23Z" fill="#e4440c" />
      <path d="M13.5 1L21 3.500V12L13.5 7Z" fill="#f79a1c" />
      <path d="M5 19L13.5 19.5V23Z" fill="#e63946" />
    </Svg>
  )],
  ["Edge", (
    <Svg w={24} h={24}>
      <defs>
        <linearGradient id="edgeTop" x1="0" y1="0" x2="24" y2="8" gradientUnits="userSpaceOnUse">
          <stop offset="0.2" stopColor="#35b9ea" />
          <stop offset="1" stopColor="#5cd663" />
        </linearGradient>
      </defs>
      <circle cx="12" cy="12" r="12" fill="#1585d8" />
      <path d="M0 11Q1.5 0 12 0Q23 0.5 24 11Q23.5 16 17 16Q14 16 14 14.5Q15.8 13 15.5 11Q14.5 7 10 6.5Q3 6 0 11Z" fill="url(#edgeTop)" />
      <path d="M9 9Q6 13 8.5 17Q12 21.5 20.5 20Q17 24 12 24Q5 23 4.5 16Q5 10 9 9Z" fill="#0c59a4" />
      <path d="M12.500 9.500Q9.500 11 10.500 14.500Q12.500 18 17 18Q20 18 22.800 16Q22 18 20.500 19Q14 20.500 10.500 17Q8 13 10.500 10Z" fill="#1e1e1e" opacity="0.85" />
    </Svg>
  )],
  ["Dropbox", (
    <Svg w={24} h={24}>
      <path d="M6 2L12 5.5L6 9L0 5.5ZM18 2L24 5.5L18 9L12 5.5ZM6 9.5L12 13L6 16.5L0 13ZM18 9.5L24 13L18 16.5L12 13ZM12 14.5L17 18L12 21.5L7 18Z" fill="#fff" />
    </Svg>
  )],
  ["File Explorer", (
    <Svg w={24} h={24}>
      <path d="M1 3H9L11 5H22V20H1Z" fill="#e3a008" />
      <path d="M1 6H23V20.5H1Z" fill="#fcd462" />
      <path d="M5 13H19V21H15V17H9V21H5Z" fill="#3f97d6" />
    </Svg>
  )],
  ["Mail", (
    <Svg w={24} h={24}>
      <path d="M0 8L12 1L24 8V12H0Z" fill="#0b5cab" />
      <path d="M1 8.5H23L12 16Z" fill="#fff" />
      <path d="M0 8.5L12 15.5L24 8.5V23H0Z" fill="#35b7f1" />
      <path d="M0 23L24 8.5V23Z" fill="#1d95e0" />
    </Svg>
  )],
  ["Stream", (
    <Svg w={24} h={24}>
      <path d="M16 0L6 9.5L11 13L8 24L17.5 13.5L12.5 9.500Z" fill="#fff" />
    </Svg>
  )],
  ["Fusion 360", <FusionLogo size={24} />],
  ["Chrome", (
    <Svg w={24} h={24}>
      <path d="M12 12L2.5 6.5A11 11 0 0 1 21.5 6.5Z" fill="#db4437" />
      <path d="M12 12L12 23A11 11 0 0 1 2.5 6.5Z" fill="#0f9d58" />
      <path d="M12 7H21.8A11 11 0 0 0 2.5 6.5L7.5 14Z" fill="#db4437" />
      <path d="M16.5 14.5L12 23A11 11 0 0 0 21.8 7H12Z" fill="#ffcd40" />
      <circle cx="12" cy="12" r="5" fill="#f1f1f1" />
      <circle cx="12" cy="12" r="4" fill="#4285f4" />
    </Svg>
  )],
];

function Taskbar() {
  return (
    <div className="flex h-10 shrink-0 items-stretch bg-[#1e1e1e] font-['Open_Sans','Noto_Sans',sans-serif] text-white">
      <button aria-label="Start" className="grid w-12 shrink-0 place-items-center">
        <Svg w={16} h={16}>
          <path d="M0 2.3L6.5 1.4V7.5H0ZM7.5 1.2L16 0V7.5H7.5ZM0 8.5H6.5V14.6L0 13.7ZM7.5 8.5H16V16L7.5 14.8Z" fill="#fff" />
        </Svg>
      </button>
      <label className="flex w-[344px] shrink-0 items-center gap-[11px] border border-[#c3c3c3] bg-[#f1f1f1] pl-[11px]">
        <Svg w={17} h={17}>
          <circle cx="10.5" cy="6.5" r="5.5" stroke="#222" strokeWidth="1.3" />
          <path d="M6.5 10.5L1 16" stroke="#222" strokeWidth="1.4" />
        </Svg>
        <input
          type="text"
          aria-label="Buscar"
          placeholder="Escribe aquí para buscar"
          className="min-w-0 flex-1 bg-transparent text-[14px] text-[#333333] outline-none placeholder:text-[#333333]"
        />
      </label>
      <div className="flex">
        {taskApps.map(([name, icon]) => (
          <button
            key={name}
            aria-label={name}
            className={
              name === "Fusion 360"
                ? "grid w-[49px] place-items-center border-b-2 border-[#e066b0] bg-[#4a4a4a] pt-0.5"
                : "grid w-[49px] place-items-center"
            }
          >
            {icon}
          </button>
        ))}
      </div>
      <div className="ml-auto flex items-center">
        <button aria-label="Get help">
          <Svg w={22} h={22}>
            <circle cx="11" cy="11" r="10" fill="#0d94dc" stroke="#fff" strokeWidth="2" />
            <path d="M7.5 8.5Q7.5 5.5 11 5.5Q14.5 5.5 14.5 8.3Q14.5 10 12.5 11Q11.2 11.7 11.2 13.2" stroke="#fff" strokeWidth="2.2" />
            <rect x="10" y="14.5" width="2.4" height="2.4" fill="#fff" />
          </Svg>
        </button>
        <button aria-label="Show hidden icons" className="ml-[10px]">
          <Svg w={12} h={8}><path d="M0.7 7L6 1.5L11.3 7" stroke="#fff" strokeWidth="1.3" /></Svg>
        </button>
        <button aria-label="Meet now" className="ml-3">
          <Svg w={12} h={16}>
            <rect x="1" y="4.5" width="7.5" height="7" rx="1.5" stroke="#fff" />
            <path d="M8.5 7L11.5 5V11L8.5 9M2 1.5Q5 -0.3 9 1.5M2 14.5Q5 16.3 9 14.5" stroke="#fff" />
          </Svg>
        </button>
        <button aria-label="Network" className="ml-3">
          <Svg w={13} h={13}>
            <path d="M0.5 12Q1 1.5 12.5 0.5" stroke="#aaa" />
            <path d="M3.5 12Q4 4.5 12.5 3.5M6.5 12Q7 7.5 12.5 6.5" stroke="#fff" />
            <path d="M9 12Q9.5 9.5 12.5 9V12.5H9Z" fill="#fff" />
          </Svg>
        </button>
        <button aria-label="Volume" className="ml-2">
          <Svg w={17} h={14}>
            <path d="M0.5 5H3L6.5 1.5V12.5L3 9H0.5Z" stroke="#fff" />
            <path d="M9 4.5Q10.5 7 9 9.5M11.5 3Q14 7 11.5 11M14 1.5Q17.5 7 14 12.5" stroke="#fff" />
          </Svg>
        </button>
        <button className="ml-[11px] text-[11px]">ESP</button>
        <button className="ml-[17px] w-[54px] whitespace-nowrap text-center text-[11px] leading-[18px]">
          <time className="-mx-2 block">09:47</time>
          <time className="-mx-2 block">5/04/2021</time>
        </button>
        <button aria-label="Action center" className="ml-5">
          <Svg w={16} h={17}>
            <path d="M0.5 0.5H15.5V12.5H10.5L8 15L5.5 12.5H0.5Z" stroke="#fff" strokeWidth="1.2" />
          </Svg>
        </button>
        <div className="ml-5 mr-1 h-10 w-px bg-[#6a6a6a]" />
      </div>
    </div>
  );
}

export default function App() {
  return (
    <div className="flex h-screen flex-col overflow-hidden bg-[#f1f1f1]">
      <TitleBar />
      <QuickBar />
      <Ribbon />
      <Canvas />
      <Timeline />
      <Taskbar />
    </div>
  );
}
